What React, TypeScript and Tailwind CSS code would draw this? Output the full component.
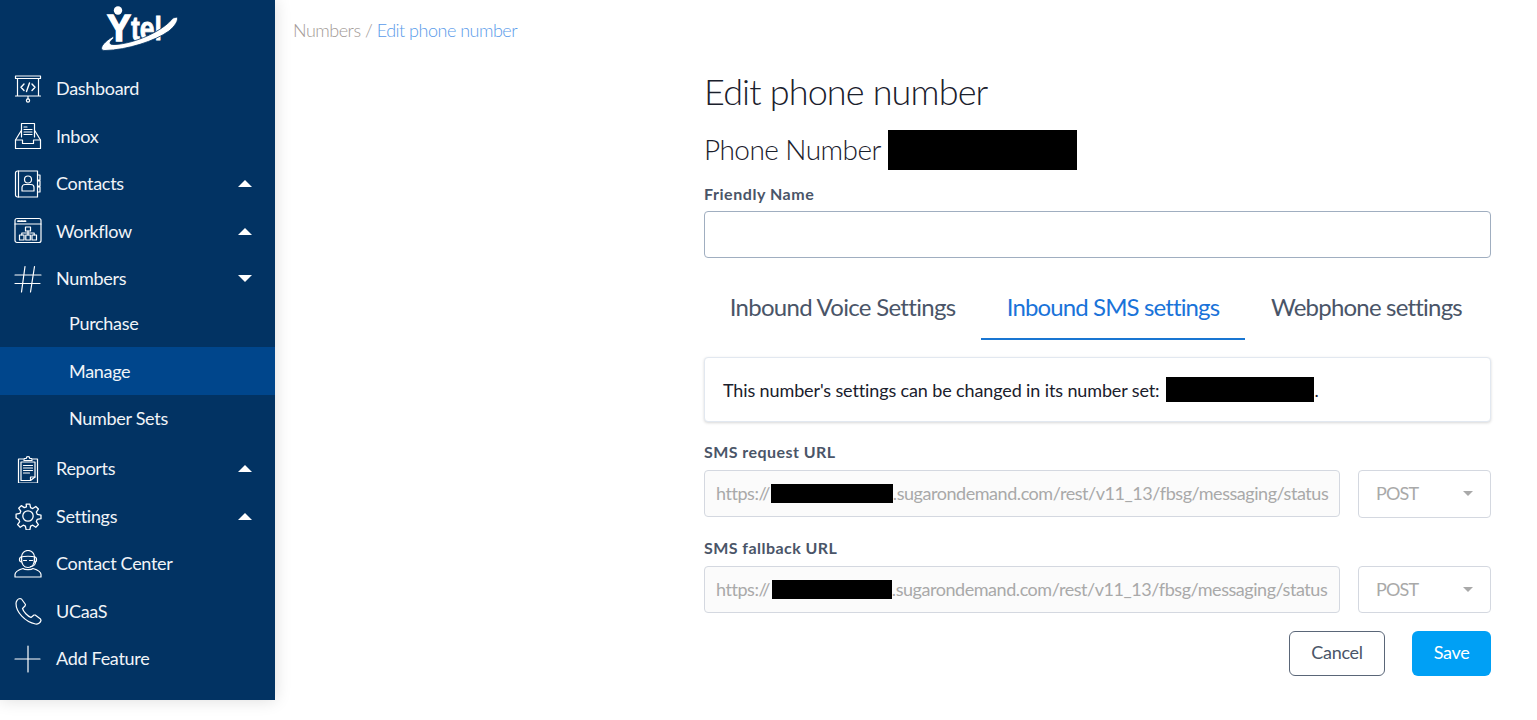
import React from "react";

type IP = { children: React.ReactNode };
const Ico = ({ children }: IP) => (
  <svg viewBox="0 0 28 28" width="28" height="28" fill="none" stroke="#fff" strokeWidth="1.2" strokeLinecap="round" strokeLinejoin="round" className="shrink-0">
    {children}
  </svg>
);

const Dashboard = () => (
  <Ico>
    <path d="M1.500 1h25v2.500h-25zM3.500 3.500v17.500h21V3.500M1.500 21h25M14 21v3" />
    <circle cx="14" cy="25.500" r="1.600" />
    <path d="M10 9l-3 3.200 3 3.200M18 9l3 3.200-3 3.200M15.500 8l-3 8.500" strokeWidth="1.400" />
  </Ico>
);
const Inbox = () => (
  <Ico>
    <path d="M7.500 15V1.500h13V15" />
    <path d="M10 5h3M10 7.500h8M10 10h8M10 12.500h8" />
    <path d="M7 9L1.500 18v8.500h25V18L21 9" />
    <path d="M1.500 18h7v3.500h11V18h7" />
  </Ico>
);
const Contacts = () => (
  <Ico>
    <path d="M1.500 3a2 2 0 012-2h20v26h-20a2 2 0 01-2-2z" />
    <path d="M4.500 1v26" />
    <path d="M23.500 5h2.500v5h-2.500M23.500 11h2.500v5h-2.500M23.500 17h2.500v5h-2.500" />
    <circle cx="14" cy="9.500" r="3.500" />
    <path d="M8 21v-3.500a3 3 0 013-3h6a3 3 0 013 3V21z" />
  </Ico>
);
const Workflow = () => (
  <Ico>
    <rect x="1" y="1.500" width="26" height="24" rx="2" />
    <path d="M1 7h26" />
    <path d="M4 4.200h1.500M7 4.200h1.500M10 4.200h1.500" strokeWidth="1.800" />
    <rect x="11.500" y="10" width="5" height="4" />
    <rect x="5.500" y="18" width="4.500" height="5" />
    <rect x="11.800" y="18" width="4.500" height="5" />
    <rect x="18" y="18" width="4.500" height="5" />
    <path d="M14 14v4M7.800 18v-2h12.400v2" />
  </Ico>
);
const Hash = () => (
  <Ico>
    <path d="M1 10h26M1 18.500h25M11 1.500L7.500 27M20.500 1.500L16.500 27" />
  </Ico>
);
const Reports = () => (
  <Ico>
    <path d="M9 4H4.500v24h19V4H19" />
    <path d="M10 5.500V3.500h2.200a1.800 1.800 0 013.600 0H18v2z" />
    <path d="M7 7h14v15l-4.500 3.500H7z" />
    <path d="M21 22h-4.500v3.500" />
    <path d="M9.500 10.500h9M9.500 13h9M9.500 15.500h9M9.500 18h6" />
  </Ico>
);
const Gear = () => (
  <Ico>
    <g transform="translate(1 1) scale(1.083)">
      <path d="M10.300 1h3.400l.7 3.300 2 .8 2.800-1.900 2.400 2.400-1.900 2.800.8 2 3.500.7v3.400l-3.500.7-.8 2 1.900 2.800-2.400 2.400-2.800-1.900-2 .8-.7 3.500h-3.400l-.7-3.500-2-.8-2.800 1.900-2.400-2.400 1.900-2.800-.8-2L1 13.700v-3.400l3.500-.7.8-2-1.900-2.800 2.400-2.400 2.800 1.900 2-.8z" strokeWidth="1.200" />
      <circle cx="12" cy="12" r="4.800" strokeWidth="1.200" />
    </g>
  </Ico>
);
const Agent = () => (
  <Ico>
    <path d="M1 27v-2.500c0-3.200 3-4.500 8-6 1.500 1.500 8.500 1.500 10 0 5 1.500 8 2.800 8 6V27z" />
    <path d="M7.500 9V7a6.500 6.500 0 0113 0v2" />
    <path d="M7.500 9c0 5 2.500 8.500 6.500 8.500s6.500-3.500 6.500-8.500" />
    <path d="M7 7c3-1 11-1 14 0M9.500 10.500h3M15.500 10.500h3" />
    <path d="M5.500 9a2 2 0 012-2v5a2 2 0 01-2-2zM22.500 9a2 2 0 00-2-2v5a2 2 0 002-2z" />
    <path d="M21.500 12c0 3-2.500 4.500-5 4.500" />
  </Ico>
);
const Phone = () => (
  <Ico>
    <path d="M2 6.500C2 4 4 1.500 6 1.500l1.500.5 4 5.500-.5 1.500-2.500 2.500c1 3.500 5 7.500 8.500 9l3-2.500h1.200l5.300 4 .5 1.500c-.5 2-3 4-5.500 3.500C11 25 2 15 2 6.500z" />
  </Ico>
);
const Plus = () => (
  <Ico>
    <path d="M14 1v26M1 14h25" />
  </Ico>
);

const Up = () => <div className="ml-auto mr-[23px] h-0 w-0 border-x-[7.500px] border-b-[7.500px] border-x-transparent border-b-white" />;
const Down = () => <div className="ml-auto mr-[23px] h-0 w-0 border-x-[7.500px] border-t-[7.500px] border-x-transparent border-t-white" />;

const Row = ({ icon, label, caret }: { icon: React.ReactNode; label: string; caret?: React.ReactNode }) => (
  <div className="flex h-[47.500px] items-center pl-[14px] text-[18px] tracking-[-0.3px] text-[#f1f4f8]">
    <span className="flex w-[42px] items-center">{icon}</span>
    <span>{label}</span>
    {caret}
  </div>
);
const Sub = ({ label, active }: { label: string; active?: boolean }) => (
  <div className={`flex h-[47.500px] items-center pl-[69px] text-[18px] tracking-[-0.3px] text-[#f1f4f8] ${active ? "bg-[#00468c]" : ""}`}>{label}</div>
);

const Logo = () => (
  <svg width="90" height="60" viewBox="0 0 90 60" className="absolute left-[95px] top-0">
    <circle cx="23" cy="10.500" r="4.200" fill="#fff" />
    <text x="12" y="41" fill="#fff" stroke="#fff" strokeWidth="1.400" fontFamily="'Liberation Sans', sans-serif" fontWeight="700" fontSize="37" textLength="24" lengthAdjust="spacingAndGlyphs">Y</text>
    <text x="36" y="40" fill="#fff" stroke="#fff" strokeWidth="0.800" fontFamily="'Liberation Sans', sans-serif" fontWeight="700" fontSize="34" textLength="31" lengthAdjust="spacingAndGlyphs">tel</text>
    <path d="M10 50.500C3 50.500 7 43 18 36.500L19 38C14 42 13 45 20 44.500 40 43.500 68 31 78 18L82 17C84 20 80 26 74 31 60 41 32 50 10 50.500z" fill="#fff" stroke="#023363" strokeWidth="0.800" />
  </svg>
);

const Field = ({ label, redactW, redactMl }: { label: string; redactW: number; redactMl: number }) => (
  <div className="mt-[18px] first:mt-0">
    <div className="h-[30px] pt-[1px] text-[16px] leading-[22px] font-bold tracking-[0.45px] text-[#4a5568]">{label}</div>
    <div className="flex items-start justify-between">
      <div className="flex h-[47px] w-[636px] items-center overflow-hidden rounded-[4px] border border-[#d4d8e0] bg-[#fbfbfb] px-[11px] text-[18px] tracking-[-0.45px] whitespace-nowrap text-[#a9a9a9]">
        https://
        <span style={{ marginLeft: redactMl, width: redactW }} className="h-[19px] shrink-0 bg-black" />
        .sugarondemand.com/rest/v11_13/fbsg/messaging/status
      </div>
      <div className="flex h-[47.500px] w-[133px] items-center justify-between rounded-[4px] border border-[#d4d8e0] bg-white pr-[17px] pl-[17px] text-[18px] tracking-[-0.8px] text-[#a9a9a9]">
        POST
        <span className="h-0 w-0 border-x-[5px] border-t-[5px] border-x-transparent border-t-[#a9a9a9]" />
      </div>
    </div>
  </div>
);

export default function App() {
  return (
    <div className="flex min-h-[720px] bg-white font-['Lato','Carlito',sans-serif]">
      <aside className="relative z-10 h-[700px] w-[275px] shrink-0 bg-[#023363] shadow-[0_0_16px_rgba(0,0,0,0.14)]">
        <Logo />
        <div className="h-[64.800px]" />
        <Row icon={<Dashboard />} label="Dashboard" />
        <Row icon={<Inbox />} label="Inbox" />
        <Row icon={<Contacts />} label="Contacts" caret={<Up />} />
        <Row icon={<Workflow />} label="Workflow" caret={<Up />} />
        <Row icon={<Hash />} label="Numbers" caret={<Down />} />
        <div className="-mt-[2.500px] mb-[2.500px]">
          <Sub label="Purchase" />
          <Sub label="Manage" active />
          <Sub label="Number Sets" />
        </div>
        <Row icon={<Reports />} label="Reports" caret={<Up />} />
        <Row icon={<Gear />} label="Settings" caret={<Up />} />
        <Row icon={<Agent />} label="Contact Center" />
        <Row icon={<Phone />} label="UCaaS" />
        <Row icon={<Plus />} label="Add Feature" />
      </aside>

      <main className="min-w-0 flex-1">
        <div className="pt-[19px] pl-[18px] text-[18px] leading-[22px] font-light tracking-[-0.5px] text-[#a39a96]">
          Numbers / <span className="text-[#5a9bea]">Edit phone number</span>
        </div>
        <div className="ml-[429px] w-[787px] pt-[28px]">
          <h1 className="h-[44px] text-[36px] leading-[44px] font-light tracking-[-0.85px] text-[#1a202c]">Edit phone number</h1>
          <div className="mt-[17px] flex h-[40px] items-center text-[28px] font-light tracking-[-0.55px] text-[#1a202c]">
            <span className="pb-[2px]">Phone Number</span>
            <span className="ml-[7px] h-[40px] w-[189px] bg-black" />
          </div>
          <div className="mt-[13px] h-[23px] text-[16px] leading-[22px] font-bold tracking-[0.55px] text-[#4a5568]">Friendly Name</div>
          <div className="mt-[5px] h-[47px] rounded-[4px] border border-[#a0aec0] bg-white" />
          <div className="mt-[25px] flex h-[57px] text-[24px] text-[#4a5568]">
            <div className="flex w-[277px] items-start justify-center pt-[6px] tracking-[-0.7px]">Inbound Voice Settings</div>
            <div className="flex w-[264px] items-start justify-center border-b-2 border-[#1976d2] pt-[6px] tracking-[-0.88px] text-[#1a73d9]">Inbound SMS settings</div>
            <div className="flex w-[243px] items-start justify-center pt-[6px] tracking-[-0.8px]">Webphone settings</div>
          </div>
          <div className="mt-[17px] flex h-[65px] items-center rounded-[4px] border border-[#e2e8f0] bg-white pl-[18px] text-[18px] tracking-[-0.125px] text-[#1a202c] shadow-[0_1px_3px_rgba(0,0,0,0.16)]">
            <span className="pt-[1px]">This number's settings can be changed in its number set:</span>
            <span className="ml-[7px] h-[25px] w-[148px] bg-black" />
            <span className="pt-[1px]">.</span>
          </div>
          <div className="mt-[18px]">
            <Field label="SMS request URL" redactMl={1} redactW={122} />
            <Field label="SMS fallback URL" redactMl={2} redactW={120} />
          </div>
          <div className="mt-[17.500px] flex justify-end gap-[27px] text-[18px] tracking-[-0.3px]">
            <button className="h-[45px] w-[96px] rounded-[6px] border border-[#5a6678] bg-white pb-[1px] text-[#4a5568]">Cancel</button>
            <button className="h-[45px] w-[79px] rounded-[6px] bg-[#00a0f5] pb-[1px] text-white">Save</button>
          </div>
        </div>
      </main>
    </div>
  );
}
